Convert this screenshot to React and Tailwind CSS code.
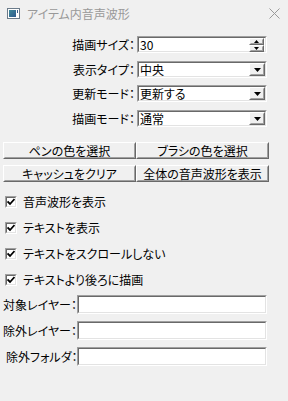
import React from "react";

const font = { fontFamily: '"Noto Sans CJK JP", "Noto Sans", sans-serif' };

function Sunken({ className = "", children }) {
    return (
        <div className={`border border-t-[#a0a0a0] border-l-[#a0a0a0] border-b-[#fff] border-r-[#fff] ${className}`}>
            <div className="w-full h-full border border-t-[#696969] border-l-[#696969] border-b-[#e3e3e3] border-r-[#e3e3e3] bg-white flex items-center">
                {children}
            </div>
        </div>
    );
}

function Raised({ className = "", children }) {
    return (
        <div className={`border border-t-[#fff] border-l-[#fff] border-b-[#696969] border-r-[#696969] bg-[#f0f0f0] ${className}`}>
            <div className="w-full h-full border border-t-[#f0f0f0] border-l-[#f0f0f0] border-b-[#a0a0a0] border-r-[#a0a0a0] flex items-center justify-center">
                {children}
            </div>
        </div>
    );
}

function Select({ value }) {
    return (
        <Sunken className="w-[130px] h-[17px]">
            <span className="flex-1 pl-[1px] text-[12px] leading-none whitespace-nowrap">{value}</span>
            <Raised className="w-[16px] h-[13px]">
                <svg width="7" height="4" viewBox="0 0 7 4"><path d="M0 0h7L3.5 4z" fill="#000" /></svg>
            </Raised>
        </Sunken>
    );
}

function Row({ label, children, className = "" }) {
    return (
        <div className={`flex items-center h-[17px] ${className}`}>
            <div className="w-[137px] pr-[2px] text-right text-[12px] leading-none whitespace-nowrap">{label}</div>
            {children}
        </div>
    );
}

function Check({ label }) {
    return (
        <div className="flex items-center h-[12px] pl-[5px] gap-[6px]">
            <Sunken className="w-[12px] h-[12px]">
                <svg width="8" height="8" viewBox="0 0 8 8" className="mx-auto">
                    <path d="M0.5 3.5l2.5 2.5 4.5-5" fill="none" stroke="#000" strokeWidth="1.8" />
                </svg>
            </Sunken>
            <span className="text-[12px] leading-none whitespace-nowrap">{label}</span>
        </div>
    );
}

function TextRow({ label, indent }) {
    return (
        <div className="flex items-center h-[19px]">
            <div className={`w-[77px] text-[12px] leading-none whitespace-nowrap ${indent ? "pl-[6px]" : "pl-[3px]"}`}>{label}</div>
            <Sunken className="w-[190px] h-[19px]" />
        </div>
    );
}

export default function App() {
    return (
        <div className="w-[288px] h-[401px] bg-[#f0f0f0] text-black overflow-hidden [font-feature-settings:'palt']" style={font}>
            {/* Title bar */}
            <div className="h-[27px] flex items-center pl-[7px] pr-[8px]">
                <svg width="13" height="11" viewBox="0 0 13 11">
                    <rect x="0.5" y="0.5" width="12" height="10" fill="#fff" stroke="#6b7b8a" />
                    <defs>
                        <linearGradient id="g" x1="0" y1="0" x2="1" y2="1">
                            <stop offset="0" stopColor="#3f8a9a" />
                            <stop offset="1" stopColor="#2e5a8e" />
                        </linearGradient>
                    </defs>
                    <rect x="2" y="2" width="7" height="7" fill="url(#g)" />
                    <rect x="10" y="2" width="1" height="3" fill="#3a5f8a" />
                </svg>
                <span className="ml-[7px] text-[12px] text-[#999] leading-none">アイテム内音声波形</span>
                <svg className="ml-auto" width="11" height="11" viewBox="0 0 11 11">
                    <path d="M0.5 0.5l10 10M10.5 0.5l-10 10" stroke="#999" strokeWidth="1" />
                </svg>
            </div>

            <div className="flex flex-col mt-[9px]">
                <Row label="描画サイズ：">
                    <Sunken className="w-[130px] h-[17px]">
                        <span className="flex-1 pl-[1px] text-[12px] leading-none">30</span>
                        <div className="flex flex-col mr-[1px]">
                            <Raised className="w-[15px] h-[7px]">
                                <svg width="5" height="3" viewBox="0 0 5 3"><path d="M2.5 0L5 3H0z" fill="#000" /></svg>
                            </Raised>
                            <Raised className="w-[15px] h-[7px]">
                                <svg width="5" height="3" viewBox="0 0 5 3"><path d="M0 0h5L2.5 3z" fill="#000" /></svg>
                            </Raised>
                        </div>
                    </Sunken>
                </Row>
                <Row label="表示タイプ：" className="mt-[8px]"><Select value="中央" /></Row>
                <Row label="更新モード：" className="mt-[7px]"><Select value="更新する" /></Row>
                <Row label="描画モード：" className="mt-[8px]"><Select value="通常" /></Row>
            </div>

            <div className="grid grid-cols-[133px_133px] gap-y-[6px] pl-[3px] mt-[15px]">
                <Raised className="h-[17px]"><span className="text-[12px] leading-none">ペンの色を選択</span></Raised>
                <Raised className="h-[17px]"><span className="text-[12px] leading-none">ブラシの色を選択</span></Raised>
                <Raised className="h-[17px]"><span className="text-[12px] leading-none">キャッシュをクリア</span></Raised>
                <Raised className="h-[17px]"><span className="text-[12px] leading-none">全体の音声波形を表示</span></Raised>
            </div>

            <div className="flex flex-col gap-[14px] mt-[14px]">
                <Check label="音声波形を表示" />
                <Check label="テキストを表示" />
                <Check label="テキストをスクロールしない" />
                <Check label="テキストより後ろに描画" />
            </div>

            <div className="flex flex-col gap-[7px] mt-[9px]">
                <TextRow label="対象レイヤー：" />
                <TextRow label="除外レイヤー：" />
                <TextRow label="除外フォルダ：" indent />
            </div>
        </div>
    );
}
